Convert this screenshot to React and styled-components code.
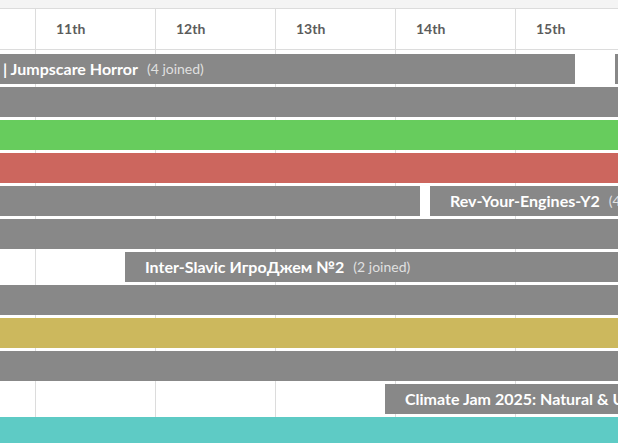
import React from "react";
import styled, { createGlobalStyle } from "styled-components";

const Global = createGlobalStyle`
  html, body { margin: 0; padding: 0; background: #fff; }
  body { font-family: Lato, "Open Sans", sans-serif; }
`;

const COL = 120;
const OFFSET = 35;

const Frame = styled.div`
  width: 618px;
  height: 443px;
  overflow: hidden;
  background: #fff;
`;

const TopStrip = styled.div`
  height: 8px;
  background: #f4f4f4;
  border-bottom: 1px solid #dcdcdc;
`;

const Header = styled.div`
  display: flex;
  height: 40px;
  border-bottom: 1px solid #dcdcdc;
  margin-left: ${OFFSET - COL}px;
`;

const DayCell = styled.div`
  flex: 0 0 ${COL}px;
  box-sizing: border-box;
  border-left: ${(p) => (p.$first ? "none" : "1px solid #dcdcdc")};
  padding: 0 0 1px 20px;
  display: flex;
  align-items: center;
  font-size: 14px;
  font-weight: 700;
  color: #5c5c5c;
`;

const Body = styled.div`
  display: flex;
  flex-direction: column;
  gap: 3px;
  padding-top: 4px;
  height: 400px;
  background-image: linear-gradient(
    to right,
    #dcdcdc 0 1px,
    transparent 1px
  );
  background-size: ${COL}px 100%;
  background-repeat: repeat-x;
  background-position: ${OFFSET}px 0;
`;

const Row = styled.div`
  display: flex;
  height: 30px;
  flex: 0 0 30px;
`;

const Bar = styled.div`
  flex: 0 0 auto;
  box-sizing: border-box;
  height: 30px;
  background: ${(p) => p.$color};
  display: flex;
  align-items: center;
  gap: 9px;
  padding: 0 0 1px ${(p) => p.$pad}px;
  white-space: nowrap;
  overflow: hidden;
`;

const Title = styled.span`
  font-size: 16px;
  font-weight: 700;
  color: #fff;
`;

const Joined = styled.span`
  font-size: 14px;
  color: rgba(255, 255, 255, 0.75);
`;

const GRAY = "#888888";
const GREEN = "#67cc5d";
const RED = "#cc665e";
const YELLOW = "#ccb85d";
const TEAL = "#5ecbc5";

const days = ["10th", "11th", "12th", "13th", "14th", "15th", "16th"];

const rows = [
  [
    { start: 0, end: 575, color: GRAY, pad: 3, title: "| Jumpscare Horror", joined: "(4 joined)" },
    { start: 615, end: 700, color: GRAY },
  ],
  [{ start: 0, end: 700, color: GRAY }],
  [{ start: 0, end: 700, color: GREEN }],
  [{ start: 0, end: 700, color: RED }],
  [
    { start: 0, end: 420, color: GRAY },
    { start: 430, end: 900, color: GRAY, pad: 20, title: "Rev-Your-Engines-Y2", joined: "(4 joined)" },
  ],
  [{ start: 0, end: 700, color: GRAY }],
  [{ start: 125, end: 800, color: GRAY, pad: 20, title: "Inter-Slavic ИгроДжем №2", joined: "(2 joined)" }],
  [{ start: 0, end: 700, color: GRAY }],
  [{ start: 0, end: 700, color: YELLOW }],
  [{ start: 0, end: 700, color: GRAY }],
  [{ start: 385, end: 1000, color: GRAY, pad: 20, title: "Climate Jam 2025: Natural & Urban Ecosystems", joined: "(3 joined)" }],
  [{ start: 0, end: 700, color: TEAL }],
];

export default function App() {
  return (
    <Frame>
      <Global />
      <TopStrip />
      <Header>
        {days.map((d, i) => (
          <DayCell key={d} $first={i === 0}>
            {i === 0 ? "" : d}
          </DayCell>
        ))}
      </Header>
      <Body>
        {rows.map((bars, ri) => (
          <Row key={ri}>
            {bars.map((b, bi) => {
              const prevEnd = bi === 0 ? 0 : bars[bi - 1].end;
              return (
                <Bar
                  key={bi}
                  $color={b.color}
                  $pad={b.pad || 0}
                  style={{ marginLeft: b.start - prevEnd, width: b.end - b.start }}
                >
                  {b.title && <Title>{b.title}</Title>}
                  {b.joined && <Joined>{b.joined}</Joined>}
                </Bar>
              );
            })}
          </Row>
        ))}
      </Body>
    </Frame>
  );
}
